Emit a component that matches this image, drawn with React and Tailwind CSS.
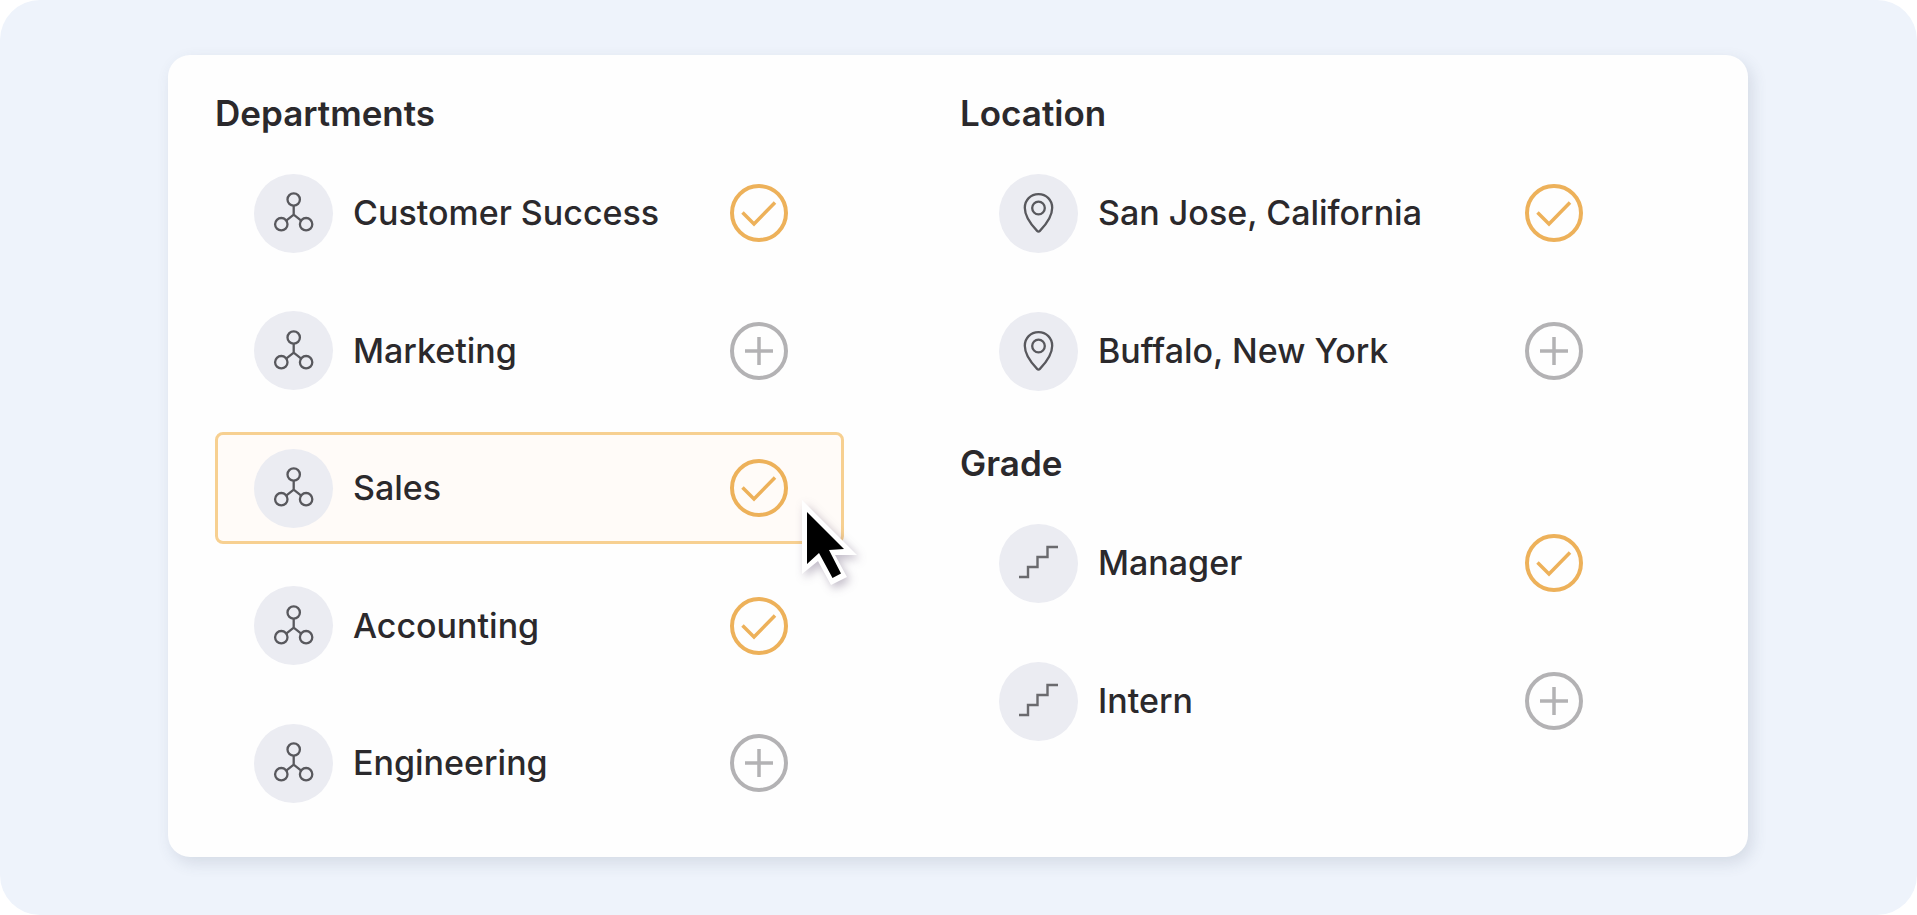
import React, { useState } from "react";

const departments = ["Customer Success", "Marketing", "Sales", "Accounting", "Engineering"];
const locations = ["San Jose, California", "Buffalo, New York"];
const grades = ["Manager", "Intern"];

function TeamIcon() {
  return (
    <svg viewBox="0 0 40 40" className="size-10 overflow-visible" fill="none" stroke="#58585d" strokeWidth="2.3">
      <circle cx="19.7" cy="6.5" r="6.2" />
      <circle cx="7.3" cy="31.2" r="6.2" />
      <circle cx="32.1" cy="31.2" r="6.2" />
      <path d="M19.700 12.700v9M12.500 27.300 19.700 21.700l7.200 5.600" />
    </svg>
  );
}

function PinIcon() {
  return (
    <svg viewBox="0 0 40 40" className="size-10 overflow-visible" fill="none" stroke="#58585d" strokeWidth="2.3" strokeLinejoin="round">
      <path d="M19.500 1.200c-8 0-13.700 6-13.700 13.600 0 8 6 16.600 12.300 23.100q1.400 1.400 2.800 0C27.200 31.400 33.200 22.800 33.200 14.800 33.200 7.200 27.500 1.200 19.500 1.200Z" />
      <circle cx="19.500" cy="15" r="6.300" />
    </svg>
  );
}

function StairsIcon() {
  return (
    <svg viewBox="0 0 40 40" className="size-10" fill="none" stroke="#6a6a6e" strokeWidth="2.4">
      <path d="M0 34h9V24h9.500V14h10V4H39" />
    </svg>
  );
}

function CursorArrow() {
  return (
    <svg viewBox="0 0 80 110" className="pointer-events-none absolute top-[55px] -right-[29px] z-10 h-[110px] w-20 drop-shadow-[3px_4px_5px_rgba(60,40,80,0.3)]">
      <path d="M12 10v74l16-13 13 24 16-8-12-22h22Z" fill="#fff" />
      <path d="M17 22v52l12-11 13.500 25 8.500-4.500L39 60l15-1Z" fill="#000" />
    </svg>
  );
}

function Option({ name, icon, checked, onToggle, active, onHover }) {
  return (
    <label
      onMouseEnter={onHover}
      className={
        "relative flex h-28 cursor-pointer items-center rounded-lg border-3 pl-9 pr-[53px] " +
        (active ? "border-[#f7d091] bg-[#fffbf8]" : "border-transparent")
      }
    >
      <span className="flex size-[79px] shrink-0 items-center justify-center rounded-full bg-[#ebecf2]">
        {icon}
      </span>
      <span className="ml-5 flex-1 text-[34px] leading-10 font-medium text-[#2b292c]">{name}</span>
      <span className="grid size-[58px] shrink-0">
        <input
          type="checkbox"
          checked={checked}
          onChange={onToggle}
          className="col-start-1 row-start-1 size-full cursor-pointer appearance-none rounded-full border-4 border-[#b3b2b4] checked:border-[#edb15a]"
        />
        <svg viewBox="0 0 58 58" className="pointer-events-none col-start-1 row-start-1 size-full" fill="none">
          {checked ? (
            <path d="M12.500 28.500 24 40 45 18.500" stroke="#edb15a" strokeWidth="3.500" />
          ) : (
            <path d="M29 15v28M15 29h28" stroke="#b3b2b4" strokeWidth="3.500" />
          )}
        </svg>
      </span>
      {active && <CursorArrow />}
    </label>
  );
}

export default function App() {
  const [selected, setSelected] = useState([
    "Customer Success",
    "Sales",
    "Accounting",
    "San Jose, California",
    "Manager",
  ]);
  const [active, setActive] = useState("Sales");

  const toggle = (name) => {
    setSelected(selected.includes(name) ? selected.filter((s) => s !== name) : [...selected, name]);
  };

  const renderOptions = (names, icon) =>
    names.map((name) => (
      <Option
        key={name}
        name={name}
        icon={icon}
        checked={selected.includes(name)}
        onToggle={() => toggle(name)}
        active={active === name}
        onHover={() => setActive(name)}
      />
    ));

  return (
    <div className="min-h-screen bg-white font-['Inter',sans-serif]">
      <main className="flex min-h-screen flex-col rounded-[40px] bg-[#eef3fb] pt-[55px] pr-[169px] pb-[58px] pl-42">
        <div className="grid flex-1 grid-cols-[629fr_679fr] gap-x-[116px] rounded-[22px] bg-[#fefefe] pt-[38px] pr-[109px] pb-[38px] pl-[47px] shadow-[4px_6px_16px_rgba(60,70,100,0.14)]">
          <section className="flex flex-col">
            <h2 className="mb-6 text-[35px] leading-10 font-semibold text-[#2b292c]">Departments</h2>
            <div className="flex flex-1 flex-col justify-between gap-[25px]">
              {renderOptions(departments, <TeamIcon />)}
            </div>
          </section>

          <div className="flex flex-col gap-9">
            <section>
              <h2 className="mb-6 text-[35px] leading-10 font-semibold text-[#2b292c]">Location</h2>
              <div className="flex flex-col gap-[26px]">{renderOptions(locations, <PinIcon />)}</div>
            </section>
            <section>
              <h2 className="mb-6 text-[35px] leading-10 font-semibold text-[#2b292c]">Grade</h2>
              <div className="flex flex-col gap-[26px]">{renderOptions(grades, <StairsIcon />)}</div>
            </section>
          </div>
        </div>
      </main>
    </div>
  );
}
